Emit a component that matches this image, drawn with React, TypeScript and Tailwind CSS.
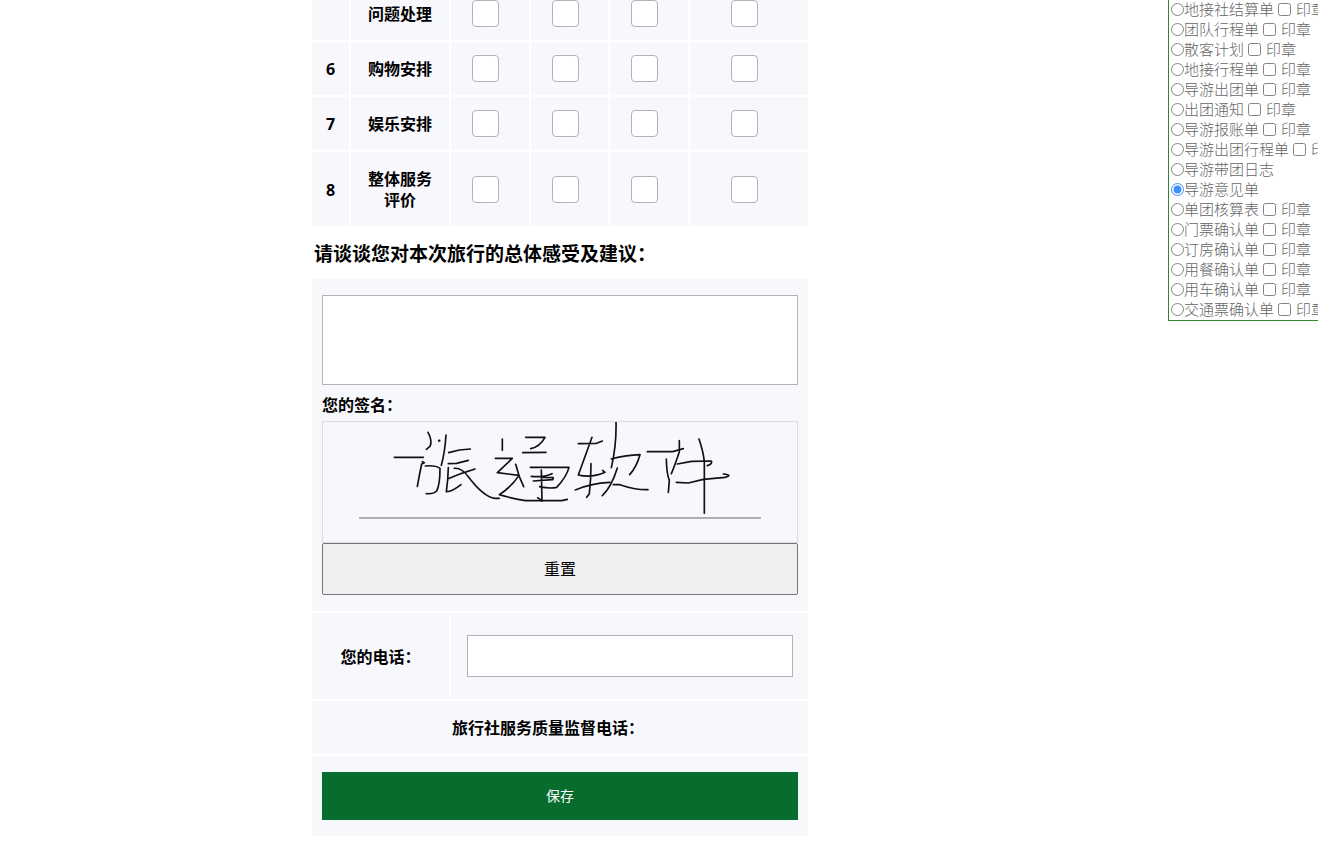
import React from 'react';

type Row = { no: string; label: string[] };

const rows: Row[] = [
  { no: '6', label: ['购物安排'] },
  { no: '7', label: ['娱乐安排'] },
  { no: '8', label: ['整体服务', '评价'] },
];

const grades = ['很满意', '满意', '一般', '不满意'];

const documents: { name: string; stamp: boolean }[] = [
  { name: '地接社结算单', stamp: true },
  { name: '团队行程单', stamp: true },
  { name: '散客计划', stamp: true },
  { name: '地接行程单', stamp: true },
  { name: '导游出团单', stamp: true },
  { name: '出团通知', stamp: true },
  { name: '导游报账单', stamp: true },
  { name: '导游出团行程单', stamp: true },
  { name: '导游带团日志', stamp: false },
  { name: '导游意见单', stamp: false },
  { name: '单团核算表', stamp: true },
  { name: '门票确认单', stamp: true },
  { name: '订房确认单', stamp: true },
  { name: '用餐确认单', stamp: true },
  { name: '用车确认单', stamp: true },
  { name: '交通票确认单', stamp: true },
];

function GradeBox({ label }: { label: string }) {
  return (
    <input
      type="checkbox"
      aria-label={label}
      className="mr-[9px] inline-block size-[27px] appearance-none rounded border border-[#b1b3b8] bg-white align-middle checked:bg-[#086c2f]"
    />
  );
}

function RatingTable() {
  return (
    <table className="w-full table-fixed border-separate border-spacing-0 text-center leading-[21px] font-bold">
      <colgroup>
        <col className="w-[37px]" />
        <col className="w-[100px]" />
        <col className="w-[80px]" />
        <col className="w-[79px]" />
        <col className="w-[80px]" />
        <col />
      </colgroup>
      <tbody>
        <tr>
          <td className="bg-[#f7f8fc]" />
          <th className="border-l-2 border-white bg-[#f7f8fc] pb-3">问题处理</th>
          {grades.map((g) => (
            <td key={g} className="h-10 border-l-2 border-white bg-[#f7f8fc] pb-[13px] leading-none">
              <GradeBox label={`问题处理 ${g}`} />
            </td>
          ))}
        </tr>
        {rows.map((row) => (
          <tr key={row.no}>
            <td className="h-[55px] border-t-2 border-white bg-[#f7f8fc] pt-0.5">{row.no}</td>
            <th className="border-t-2 border-l-2 border-white bg-[#f7f8fc] pt-[17px] pb-[15px]">
              {row.label.map((line) => (
                <div key={line}>{line}</div>
              ))}
            </th>
            {grades.map((g) => (
              <td key={g} className="border-t-2 border-l-2 border-white bg-[#f7f8fc] leading-none">
                <GradeBox label={`${row.label.join('')} ${g}`} />
              </td>
            ))}
          </tr>
        ))}
      </tbody>
    </table>
  );
}

function Signature() {
  return (
    <svg viewBox="0 0 1422 360" className="block w-full" fill="none" stroke="#111" strokeWidth="5" strokeLinecap="round" strokeLinejoin="round" role="img" aria-label="旅通软件">
      <path d="M108 288H1314" stroke="#999" strokeLinecap="butt" strokeWidth="5" />
      <g transform="translate(171 -21)">
        <path d="M43 127H130M144 52Q158 78 150 94L139 103M198 60Q195 110 184 151M206 113L238 105L271 102M205 146L230 145L265 136" />
        <path d="M177 77h1" strokeWidth="7" />
        <path d="M127 140L133 143L125 147Q118 180 112 214M136 153Q165 150 180 160Q180 210 170 228Q160 238 139 236" />
        <path d="M205 158L203 195L199 230Q215 231 243 209M208 190L245 175L285 162M223 160Q245 158 265 185Q310 245 345 250L358 250" />
      </g>
      <g transform="translate(471 -21)">
        <path d="M67 72V106M137 67H195Q180 95 152 101M128 113L198 112" />
        <path d="M46 130H97L52 173L117 181Q95 215 58 239Q95 250 137 257H245L262 253M107 148L118 185L131 215" />
        <path d="M151 157H267Q260 185 230 217Q210 222 179 215M154 184Q190 188 216 176M160 198L218 194L220 188L190 187M184 165L186 258L173 248" />
      </g>
      <g transform="translate(711 -21)">
        <path d="M55 86L110 85L127 78M96 67L55 180Q95 190 135 172L128 166M93 146Q93 190 88 236L80 247M46 225Q90 205 150 202" />
        <path d="M168 20Q170 90 154 158M154 132Q200 120 240 119Q230 155 209 179M172 159Q155 215 127 242M160 209L180 209Q225 225 264 224" />
      </g>
      <g transform="translate(951 -21)">
        <path d="M22 110H98L130 101M118 77V110Q105 150 94 176M79 132Q80 180 88 195L85 232" />
        <path d="M112 147L155 139L214 138Q218 147 202 152M177 72Q190 110 193 140V295M109 202L145 204L190 193L255 187Q280 180 250 177" />
      </g>
    </svg>
  );
}

function DocumentPicker() {
  return (
    <aside className="w-[150px] shrink-0 self-start overflow-hidden border-b border-l border-[#2f8a2f] pl-0.5 font-['Noto_Sans_CJK_SC',sans-serif] text-[15px] leading-[18px] font-light text-[#666]">
      {documents.map((doc) => (
        <div key={doc.name} className="flex h-5 items-center pb-0.5 whitespace-nowrap">
          <label className="flex shrink-0 items-center">
            <input
              type="radio"
              name="document"
              defaultChecked={doc.name === '导游意见单'}
              className="size-[13px] accent-[#2a86f8] opacity-90"
            />
            {doc.name}
          </label>
          {doc.stamp && (
            <label className="ml-1 flex shrink-0 items-center gap-[5px]">
              <input type="checkbox" className="size-[13px] opacity-90" />
              印章
            </label>
          )}
        </div>
      ))}
    </aside>
  );
}

export default function App() {
  return (
    <div className="flex gap-12 overflow-hidden bg-white font-['Open_Sans','Noto_Sans_CJK_SC',sans-serif] text-base text-black">
      <main className="min-w-0 flex-1">
        <form className="mx-auto w-full max-w-[496px]" onSubmit={(e) => e.preventDefault()}>
          <RatingTable />
          <h3 className="px-0.5 pt-4 pb-3 text-[19px] leading-[25px] font-bold">
            <label htmlFor="comment">请谈谈您对本次旅行的总体感受及建议：</label>
          </h3>
          <div className="flex flex-col gap-0.5">
            <div className="bg-[#f7f8fc] px-2.5 py-4">
              <textarea id="comment" className="block h-[90px] w-full resize-none border border-[#b1b3b8] bg-white p-2" />
              <p className="pt-2.5 pb-1.5 leading-5 font-bold">您的签名：</p>
              <div className="border border-[#ddd]">
                <Signature />
              </div>
              <button type="reset" className="block h-[52px] w-full rounded-xs border border-[#767676] bg-[#efefef]">
                重置
              </button>
            </div>
            <div className="grid grid-cols-[137px_1fr] gap-0.5">
              <label htmlFor="phone" className="flex items-center justify-center bg-[#f7f8fc] pt-0.5 font-bold">
                您的电话：
              </label>
              <div className="bg-[#f7f8fc] py-[22px] pr-[15px] pl-4">
                <input id="phone" type="tel" className="block h-[42px] w-full border border-[#b1b3b8] bg-white px-2" />
              </div>
            </div>
            <p className="bg-[#f7f8fc] pt-[17px] pr-6 pb-[15px] text-center leading-[21px] font-bold">旅行社服务质量监督电话：</p>
            <div className="bg-[#f7f8fc] px-2.5 py-4">
              <button type="submit" className="block h-12 w-full bg-[#086c2f] text-sm text-white">
                保存
              </button>
            </div>
          </div>
        </form>
      </main>
      <DocumentPicker />
    </div>
  );
}
